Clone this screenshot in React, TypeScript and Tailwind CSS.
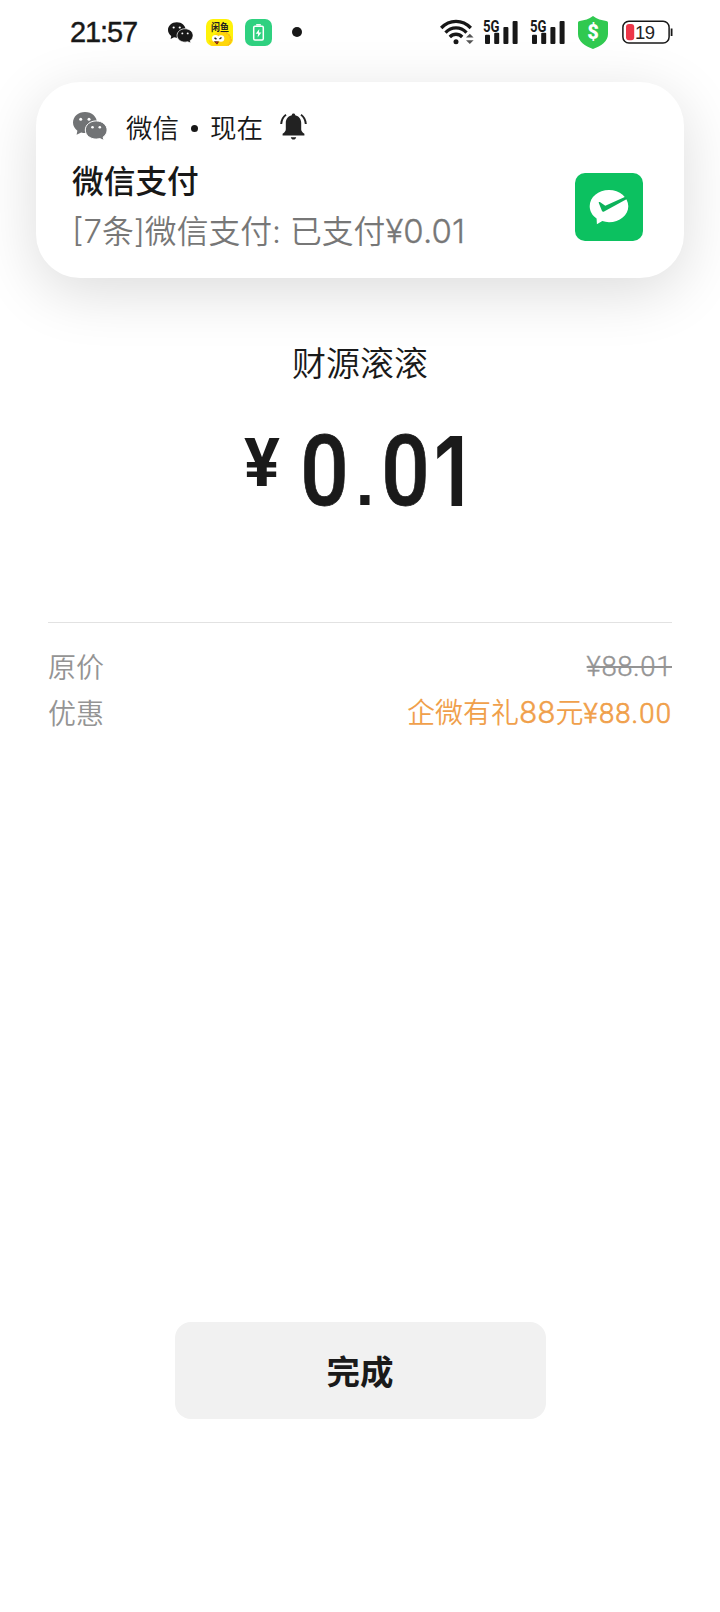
import type { ReactNode } from 'react';

interface IconProps {
  className?: string;
}

interface PriceRowProps {
  label: string;
  children: ReactNode;
}

function WechatIcon({ className }: IconProps) {
  return (
    <svg viewBox="0 0 34 28" className={className} aria-hidden="true">
      <path
        fill="currentColor"
        d="M12 0C5.2 0 0 4.6 0 10.6c0 3.4 1.7 6.1 4.4 8.1l-.8 4 4.6-2.3c1.2.4 2.5.6 3.8.6 6.8 0 12-4.6 12-10.4S18.800 0 12 0z"
      />
      <path
        fill="currentColor"
        stroke="white"
        strokeWidth="1"
        d="M23.200 8.900c-6 0-10.900 4-10.900 9.100 0 5.200 4.900 9.100 10.900 9.100 1.300 0 2.500-.2 3.600-.5l4.300 1.900-1-3.400c2.500-1.700 4-4.200 4-7.100 0-5.100-4.900-9.100-10.900-9.100z"
      />
      <g fill="white">
        <circle cx="7.700" cy="7.200" r="1.500" />
        <circle cx="16" cy="7.200" r="1.500" />
        <circle cx="19.500" cy="15.200" r="1.300" />
        <circle cx="26.800" cy="15.200" r="1.300" />
      </g>
    </svg>
  );
}

function XianyuIcon() {
  return (
    <span className="relative block h-[27px] w-[27px] overflow-hidden rounded-[7px] bg-[#fff20a]">
      <svg viewBox="0 0 27 27" className="absolute inset-0 h-full w-full" aria-hidden="true">
        <path d="M5 27c-1-3-2-4-2.500-6l3 1C7 15 12 12 17 12.500c6 .5 9 5 8.500 9.500-.3 2-1 4-2.500 5z" fill="#ffd60a" />
        <path d="M17 13l3 .5 2 2 2 1 .5 3 1 2-1.500 2-.5 2-3 1.500" fill="none" stroke="#f9b51c" strokeWidth="1.500" strokeDasharray="2 1" />
        <circle cx="9.500" cy="19.500" r="3.600" fill="white" />
        <circle cx="15" cy="19.500" r="3.300" fill="white" />
        <path d="M8.500 19l2 1M13.500 20l2-1.500" stroke="#222" strokeWidth="1.400" />
        <path d="M8.500 22.500l4 .3-1.500 2.400z" fill="#d22b1f" stroke="#331a00" strokeWidth=".6" />
      </svg>
      <span className="absolute top-[3px] left-[4.500px] block w-5 origin-top-left scale-x-90 text-[10px] leading-[10px] font-bold whitespace-nowrap text-[#222]">
        闲鱼
      </span>
    </span>
  );
}

function ChargeIcon() {
  return (
    <svg viewBox="0 0 27 27" className="h-[27px] w-[27px]" aria-hidden="true">
      <rect width="27" height="27" rx="7" fill="#2fd180" />
      <rect x="8.700" y="7.200" width="9.600" height="13.800" rx="1.200" fill="none" stroke="white" strokeWidth="1.500" />
      <path d="M11.200 5.800h4.600" stroke="white" strokeWidth="1.500" />
      <path d="M14.300 10l-3.600 4.800h2.400l-.5 3.700 3.800-5h-2.500z" fill="white" />
    </svg>
  );
}

function WifiIcon() {
  return (
    <svg viewBox="0 0 34 26" className="h-[26px] w-[34px]" aria-hidden="true">
      <g fill="none" stroke="#181818" strokeWidth="3.300">
        <path d="M1.200 9C9.500.2 22.500.2 30.800 9" />
        <path d="M5.500 13.600c6-6.200 15-6.200 21 0" />
        <path d="M9.800 18c3.600-3.700 8.800-3.700 12.400 0" />
      </g>
      <circle cx="16" cy="22.800" r="2.500" fill="#181818" />
      <path d="M26 18.500l3.800-3.800 3.800 3.800z" fill="#555" />
      <path d="M26 21.300l3.800 3.800 3.800-3.800z" fill="#555" />
    </svg>
  );
}

function SignalIcon() {
  return (
    <span className="relative block h-6 w-[35px]">
      <svg viewBox="0 0 35 24" className="absolute inset-0 h-full w-full" fill="#181818" aria-hidden="true">
        <rect x="2" y="14.800" width="5" height="9.200" rx="1" />
        <rect x="11.200" y="12.800" width="5" height="11.200" rx="1" />
        <rect x="20.400" y="7" width="5" height="17" rx="1" />
        <rect x="29.600" y="1" width="5" height="23" rx="1" />
      </svg>
      <span className="absolute -top-px left-0 origin-left scale-x-[0.82] font-[Roboto] text-[16px] leading-[15px] font-bold text-[#181818]">
        5G
      </span>
    </span>
  );
}

function ShieldIcon() {
  return (
    <span className="relative flex h-[33px] w-[30px] items-center justify-center">
      <svg viewBox="0 0 30 33" className="absolute inset-0 h-full w-full" aria-hidden="true">
        <path
          d="M15 0c4 3 8.500 4.400 13.200 4.900 1.100.1 1.800.8 1.800 1.900v11.200C30 25.500 23 30 15 33 7 30 0 25.500 0 18V6.800c0-1.100.7-1.800 1.800-1.900C6.500 4.400 11 3 15 0z"
          fill="#30c950"
        />
      </svg>
      <span className="relative font-[Roboto] text-[20px] leading-none font-black text-white">$</span>
    </span>
  );
}

function BatteryIcon() {
  return (
    <span className="relative block h-6 w-[51px]">
      <svg viewBox="0 0 51 24" className="absolute inset-0 h-full w-full" aria-hidden="true">
        <rect x=".9" y="1.200" width="46.200" height="21.800" rx="6" fill="white" stroke="#181818" strokeWidth="1.500" />
        <rect x="4" y="4" width="8.200" height="16.200" rx="3" fill="#ed3648" />
        <path d="M49.600 8.500v7.500" stroke="#181818" strokeWidth="1.800" />
      </svg>
      <span className="absolute top-[3px] left-[13px] font-['Liberation_Sans'] text-[18.500px] leading-[19px] tracking-[-0.5px] text-[#222]">
        19
      </span>
    </span>
  );
}

function BellIcon() {
  return (
    <svg viewBox="0 0 27 27" className="h-[27px] w-[27px]" aria-hidden="true">
      <path
        d="M13.500.5c1 0 1.700.7 1.700 1.700 3.800.8 6 3.700 6 7.600v6.400c0 1.700 1 3 3.200 4.500v1.700H2.600v-1.700C4.800 19.200 5.800 17.900 5.800 16.200V9.800c0-3.900 2.200-6.800 6-7.600 0-1 .7-1.700 1.700-1.700z"
        fill="#222"
      />
      <path d="M10.800 24.200h5.400c-.4 1.500-1.300 2.300-2.700 2.300s-2.300-.8-2.700-2.300z" fill="#222" />
      <path d="M6 1.800C3.200 3.800 1.500 6.800 1.200 11M21 1.800c2.800 2 4.500 5 4.800 9.200" fill="none" stroke="#222" strokeWidth="2" />
    </svg>
  );
}

function WechatPayIcon() {
  return (
    <svg viewBox="0 0 68 68" className="h-[68px] w-[68px]" aria-hidden="true">
      <rect width="68" height="68" rx="10" fill="#0cc160" />
      <path
        d="M34 17c-10.700 0-19.300 7.200-19.300 16.200 0 4.900 2.600 9.300 6.900 12.300l.3 5.700 5.400-3.100c2.100.7 4.300 1.100 6.700 1.100 10.700 0 19.300-7.100 19.300-16S44.700 17 34 17z"
        fill="white"
      />
      <path d="M50.300 23.800L30.300 32.700l-5.400-3.600c-.8-.4-1.400.1-1.100.9l3.100 7.800c.5 1 1.300 1.200 2.200.6l22.800-12.400z" fill="#0cb25a" />
    </svg>
  );
}

function StatusBar() {
  return (
    <header className="flex h-[82px] items-start justify-between pr-[47px] pl-[70px]">
      <div className="flex h-16 items-center">
        <span className="w-[98px] font-['Liberation_Sans'] text-[29px] leading-none tracking-[-1.1px] text-[#181818] [-webkit-text-stroke:0.4px_#181818]">
          21:57
        </span>
        <WechatIcon className="h-[21px] w-[25px] text-[#181818]" />
        <span className="ml-[13px]">
          <XianyuIcon />
        </span>
        <span className="ml-3">
          <ChargeIcon />
        </span>
        <span className="ml-5 h-2.5 w-2.5 rounded-full bg-[#181818]" />
      </div>
      <div className="flex h-16 items-center">
        <WifiIcon />
        <span className="ml-[9px]">
          <SignalIcon />
        </span>
        <span className="ml-3">
          <SignalIcon />
        </span>
        <span className="ml-[13px]">
          <ShieldIcon />
        </span>
        <span className="ml-[14px]">
          <BatteryIcon />
        </span>
      </div>
    </header>
  );
}

function NotificationCard() {
  return (
    <section className="mx-9 flex h-[196px] items-start justify-between rounded-[44px] bg-white pt-[25px] pr-[41px] pl-[37px] shadow-[0_14px_60px_rgba(0,0,0,0.14)]">
      <div>
        <div className="flex h-10 items-center text-[26.500px] font-[350] text-[#181818]">
          <WechatIcon className="mt-[-2px] h-7 w-[34px] text-[#717375]" />
          <span className="ml-[19px]">微信</span>
          <span className="mx-3 mt-0.5 h-[7px] w-[7px] rounded-full bg-[#181818]" />
          <span>现在</span>
          <span className="mt-[-1px] ml-[17px]">
            <BellIcon />
          </span>
        </div>
        <h2 className="mt-3 -ml-px text-[31.700px] leading-10 font-medium text-[#181818]">微信支付</h2>
        <p className="mt-2.5 -ml-px flex items-baseline text-[31.800px] leading-10 font-[350] whitespace-nowrap text-[#777]">
          <span>
            <span className="font-[Inter] text-[33px]">[7</span>条<span className="font-[Inter]">]</span>微信支付<span className="font-[Inter]">: </span>已支付
          </span>
          <span className="font-[Inter] text-[33px] tracking-[0.1px] [-webkit-text-stroke:0.3px_#777]">¥0.01</span>
        </p>
      </div>
      <div className="mt-[66px]">
        <WechatPayIcon />
      </div>
    </section>
  );
}

function PriceRow({ label, children }: PriceRowProps) {
  return (
    <div className="flex h-[46px] items-center justify-between">
      <span className="text-[#949494]">{label}</span>
      {children}
    </div>
  );
}

export default function App() {
  return (
    <main className="flex h-[1612px] w-[720px] flex-col overflow-hidden bg-white font-['Noto_Sans_CJK_SC',sans-serif] text-[#1a1a1a]">
      <StatusBar />
      <NotificationCard />

      <div className="mt-[59px] flex flex-col items-center">
        <h1 className="text-[34px] leading-[50px] font-[350]">财源滚滚</h1>
        <p className="mt-[31px] mb-px flex h-[106px] w-[232px] items-start font-[Roboto] text-[99px] leading-[107px] font-medium">
          <span className="mt-[13px] w-[60px] text-[67px] leading-[64px] font-bold">¥</span>
          <span className="flex w-[41px] scale-x-[0.86] justify-center [-webkit-text-stroke:0.8px_#1a1a1a]">0</span>
          <span className="mt-[11px] flex w-[41px] justify-center font-['Liberation_Sans'] text-[66px] font-bold">.</span>
          <span className="flex w-[41px] scale-x-[0.86] justify-center [-webkit-text-stroke:0.8px_#1a1a1a]">0</span>
          <span className="flex w-[50px] scale-x-[0.85] justify-center font-[Inter] text-[96px] font-semibold">1</span>
        </p>
      </div>

      <div className="mx-12 mt-[97px] border-t border-[#e2e2e2] pt-[20px] text-[28px] font-[350]">
        <PriceRow label="原价">
          <span className="pt-0.5 font-[Roboto] text-[27.500px] font-light tracking-[0.6px] text-[#949494] line-through [-webkit-text-stroke:0.4px_#949494]">
            ¥88.01
          </span>
        </PriceRow>
        <PriceRow label="优惠">
          <span className="flex items-baseline pt-px text-[#f0a04b]">
            企微有礼<span className="font-[Inter] text-[30px] leading-none font-light [-webkit-text-stroke:0.4px_#f0a04b]">88</span>元
            <span className="font-[Roboto] text-[27.500px] font-light tracking-[1.100px] [-webkit-text-stroke:0.700px_#f0a04b]">
              ¥88.00
            </span>
          </span>
        </PriceRow>
      </div>

      <button
        type="button"
        className="mx-auto mt-[587px] h-[97px] w-[371px] shrink-0 rounded-2xl bg-[#f1f1f1] text-[33.500px] font-bold"
      >
        完成
      </button>
    </main>
  );
}
